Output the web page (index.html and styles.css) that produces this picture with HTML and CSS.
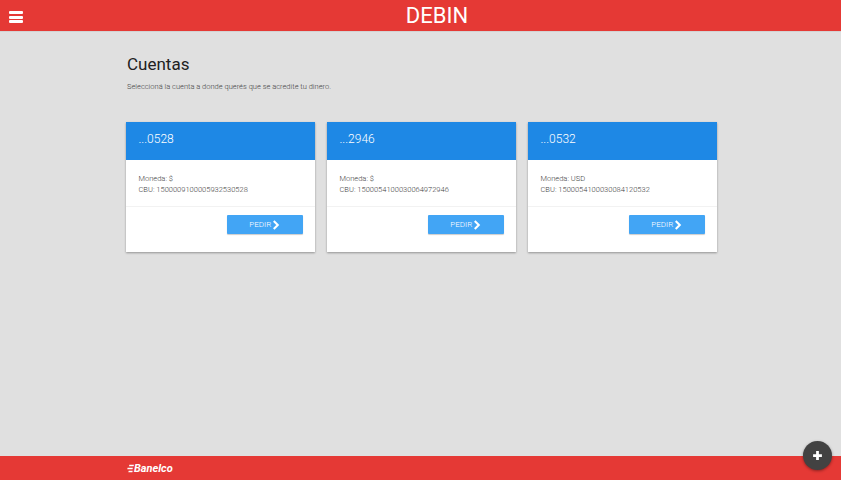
FILE: index.html
```html
<!DOCTYPE html>
<html lang="es">
<head>
<meta charset="utf-8">
<title>DEBIN</title>
<link rel="stylesheet" href="styles.css">
</head>
<body>
<div class="page">
  <header class="topbar">
    <button class="menu" aria-label="Menu">
      <span></span><span></span><span></span>
    </button>
    <h1 class="brand">DEBIN</h1>
  </header>
  <main class="content">
    <h2 class="title">Cuentas</h2>
    <p class="subtitle">Seleccioná la cuenta a donde querés que se acredite tu dinero.</p>
    <section class="cards">
      <article class="card">
        <div class="card-head">...0528</div>
        <div class="card-body"><div>Moneda: $</div><div>CBU: 1500009100005932530528</div></div>
        <div class="card-foot"><a class="btn">PEDIR <svg class="chev" viewBox="0 0 10 12"><path d="M2.2 1 7.2 6 2.2 11" /></svg></a></div>
      </article>
      <article class="card">
        <div class="card-head">...2946</div>
        <div class="card-body"><div>Moneda: $</div><div>CBU: 1500054100030064972946</div></div>
        <div class="card-foot"><a class="btn">PEDIR <svg class="chev" viewBox="0 0 10 12"><path d="M2.2 1 7.2 6 2.2 11" /></svg></a></div>
      </article>
      <article class="card">
        <div class="card-head">...0532</div>
        <div class="card-body"><div>Moneda: USD</div><div>CBU: 1500054100030084120532</div></div>
        <div class="card-foot"><a class="btn">PEDIR <svg class="chev" viewBox="0 0 10 12"><path d="M2.2 1 7.2 6 2.2 11" /></svg></a></div>
      </article>
    </section>
  </main>
  <footer class="footer">
    <div class="logo">
      <svg class="logo-mark" viewBox="0 0 9 11"><path d="M3 .8h6l-.5 1.8H2.6zM.8 4.6h6.8L7.1 6.4H.3zM2.2 8.4h5.2L6.9 10.2H1.7z"/></svg>
      <span>Banelco</span>
    </div>
  </footer>
  <button class="fab" aria-label="Agregar"><svg viewBox="0 0 12 12"><path d="M6 1.2v9.6M1.2 6h9.6"/></svg></button>
</div>
</body>
</html>
```
FILE: styles.css
```css
* { box-sizing: border-box; }
html, body { margin: 0; height: 100%; }
body {
  font-family: Roboto, "Liberation Sans", sans-serif;
  background: #e0e0e0;
  overflow: hidden;
}
.page {
  position: relative;
  display: flex;
  flex-direction: column;
  height: 480px;
}
.topbar {
  display: flex;
  align-items: center;
  justify-content: center;
  position: relative;
  height: 32px;
  flex: none;
  padding-left: 33px;
  background: #e53935;
  border-bottom: 1px solid #d3d3d3;
}
.menu {
  position: absolute;
  left: 9px;
  top: 11px;
  width: 14px;
  display: flex;
  flex-direction: column;
  gap: 1.5px;
  padding: 0;
  border: 0;
  background: none;
}
.menu span { display: block; height: 3px; width: 13.5px; background: #fff; border-radius: 1px; }
.brand {
  margin: 0;
  font-size: 22px;
  font-weight: 400;
  line-height: 31px;
  color: #fff;
}
.content {
  flex: 1;
  padding: 22px 124px 0 126px;
}
.title {
  margin: 0;
  padding-left: 1px;
  font-size: 17px;
  font-weight: 400;
  line-height: 20px;
  color: #212121;
}
.subtitle {
  margin: 7px 0 0;
  padding-left: 1px;
  font-size: 7.5px;
  line-height: 12px;
  font-weight: 300;
  color: #424242;
}
.cards {
  display: grid;
  grid-template-columns: repeat(3, 1fr);
  column-gap: 12px;
  margin-top: 29px;
}
.card {
  height: 130px;
  background: #fff;
  box-shadow: 0 1px 2px rgba(0,0,0,.35);
}
.card-head {
  height: 38px;
  padding: 0 12.5px;
  background: #1e88e5;
  color: #fff;
  font-size: 12px;
  font-weight: 300;
  line-height: 34px;
}
.card-body {
  height: 47px;
  padding: 13px 12.5px 0;
  font-size: 7.5px;
  font-weight: 300;
  line-height: 11px;
  color: #424242;
  border-bottom: 1px solid #f2f2f2;
}
.card-foot {
  display: flex;
  justify-content: flex-end;
  padding: 8px 12px 0 0;
}
.btn {
  display: flex;
  align-items: center;
  justify-content: center;
  gap: 1px;
  width: 76.5px;
  height: 19px;
  background: #42a5f5;
  border-radius: 1px;
  box-shadow: 0 1px 1px rgba(0,0,0,.2);
  color: #fff;
  font-size: 8px;
  font-weight: 300;
}
.chev { width: 8px; height: 10px; fill: none; stroke: #fff; stroke-width: 2.6; }
.footer {
  flex: none;
  height: 24px;
  background: #e53935;
  padding-left: 127px;
  display: flex;
  align-items: center;
}
.logo {
  display: flex;
  align-items: center;
  gap: 0;
  color: #fff;
  font-size: 11px;
  font-weight: 700;
  font-style: italic;
}
.logo-mark { width: 7px; height: 9px; fill: #fff; }
.fab {
  position: absolute;
  left: 803px;
  top: 441px;
  width: 29px;
  height: 29px;
  padding: 0;
  border: 0;
  border-radius: 50%;
  background: #424242;
  box-shadow: 0 1px 3px rgba(0,0,0,.4);
  display: flex;
  align-items: center;
  justify-content: center;
}
.fab svg { width: 11px; height: 11px; fill: none; stroke: #fff; stroke-width: 3; }
```
